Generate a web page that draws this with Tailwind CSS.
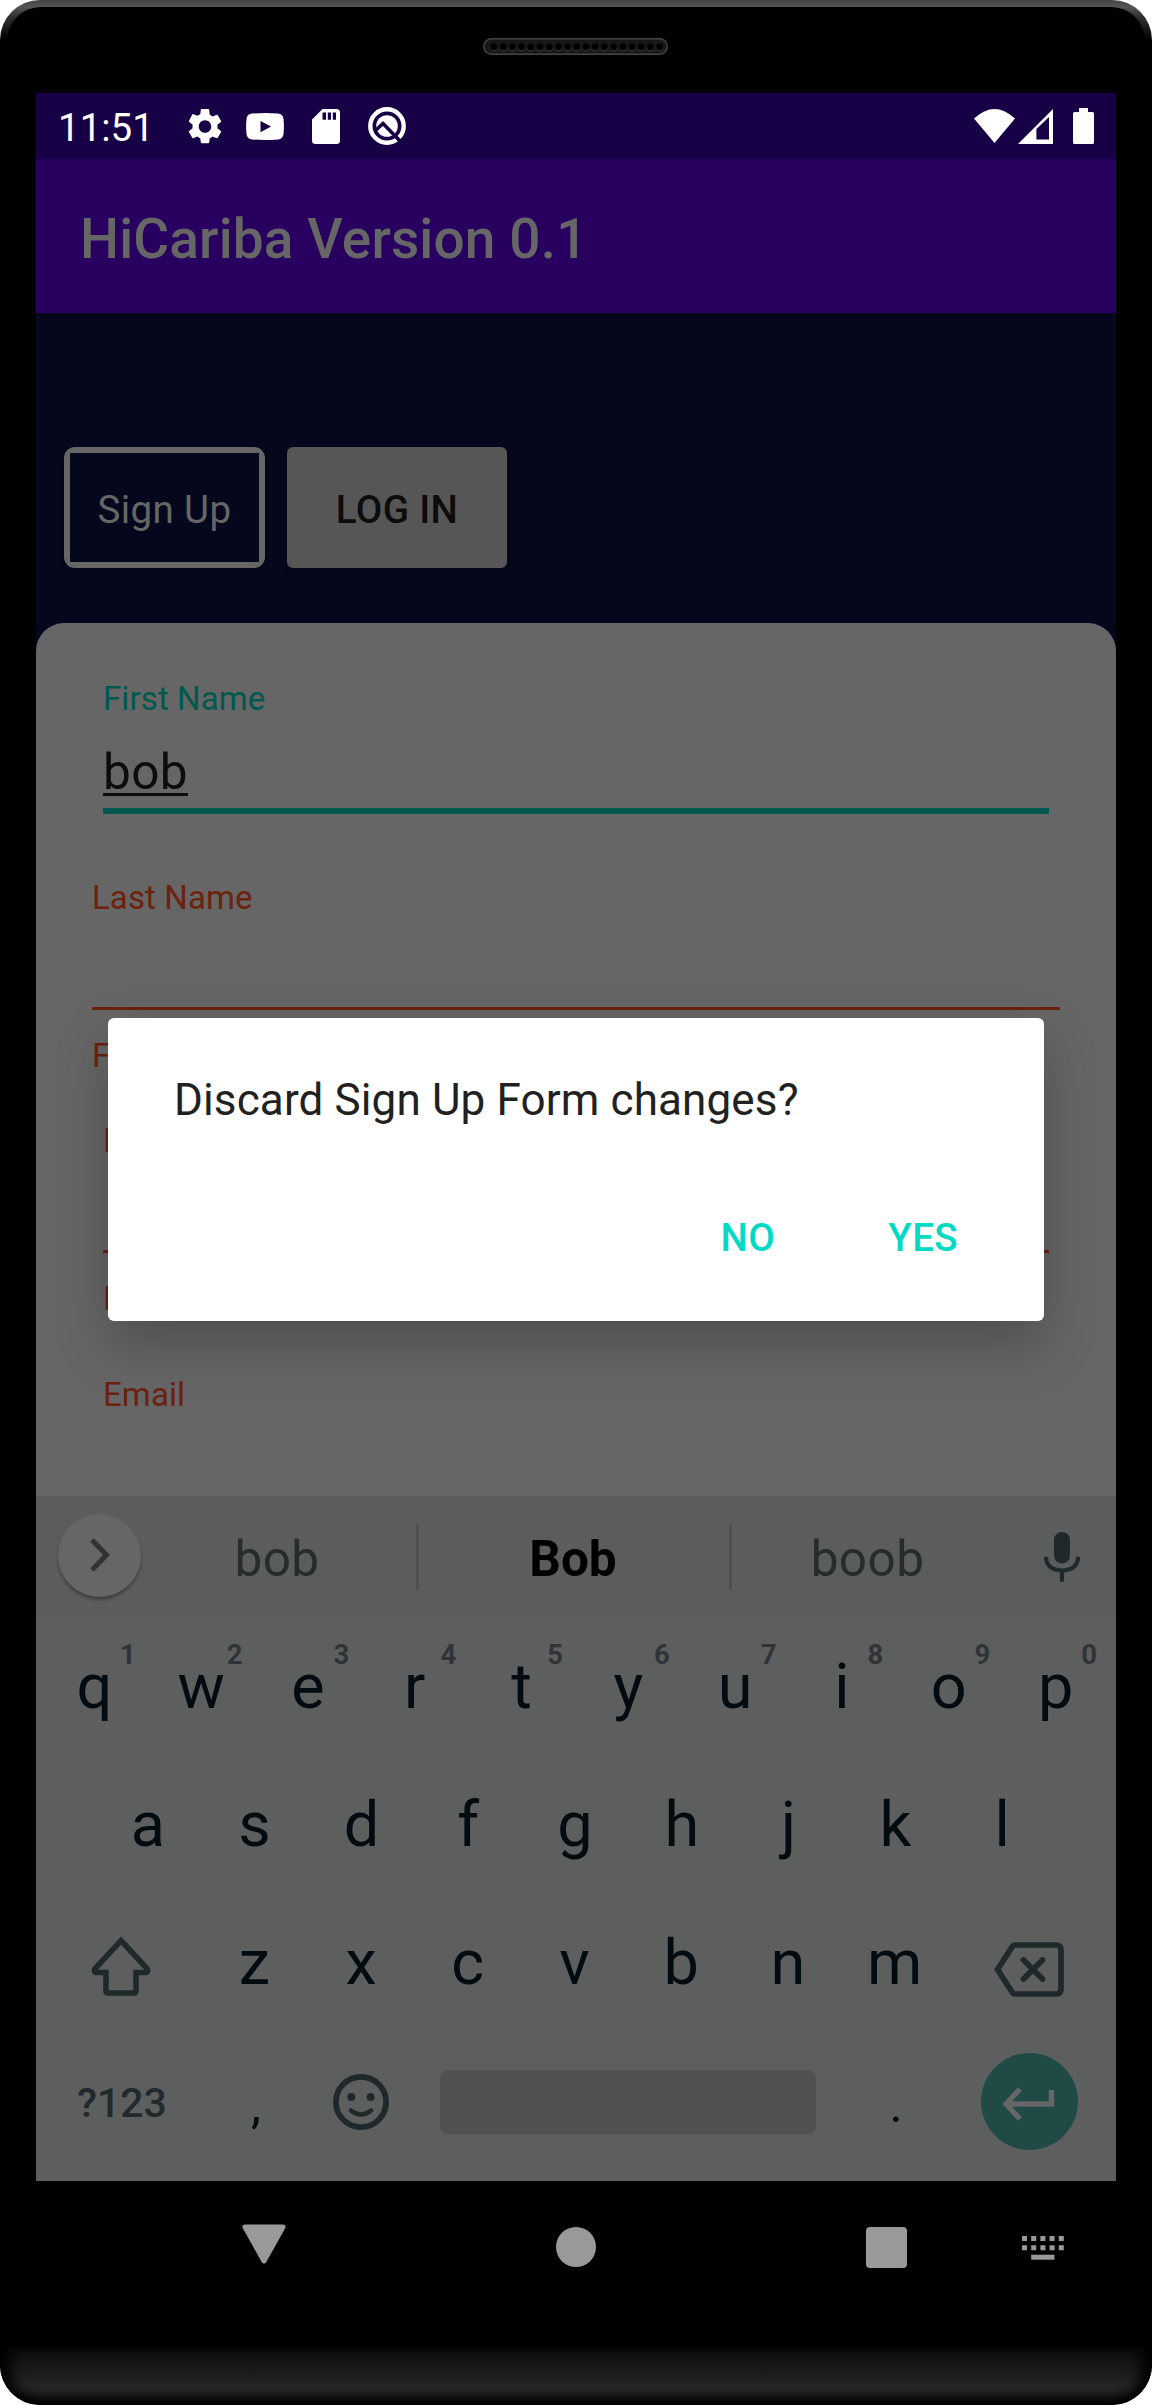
<!DOCTYPE html>
<html lang="en">
<head>
<meta charset="utf-8">
<title>HiCariba</title>
<script src="https://cdn.jsdelivr.net/npm/@tailwindcss/browser@4"></script>
</head>
<body class="bg-white">
<div class="relative w-[1152px] h-[2405px] rounded-[40px] overflow-hidden bg-black bg-[linear-gradient(to_bottom,#444_0px,#555_7px,#333_16px,#000_40px)] font-[Roboto,sans-serif]">
  <div class="flex flex-col h-full pt-[7px]">
    <!-- top bezel with speaker -->
    <div class="h-[86px] mx-[7px] shrink-0 bg-black rounded-t-[34px] flex justify-center pt-[31px]">
      <svg class="w-[185px] h-[17px] -ml-[1px]" viewBox="0 0 185 17">
        <defs><pattern id="holes" x="6.4" y="0" width="9.2" height="17" patternUnits="userSpaceOnUse"><circle cx="4.6" cy="9.6" r="3.8" fill="#3f3f3f"/><circle cx="4.6" cy="8.8" r="3.6" fill="#000"/></pattern></defs>
        <rect x=".75" y=".75" width="183.5" height="15.5" rx="7.75" fill="#181818" stroke="#444" stroke-width="1.5"/>
        <rect x="6.4" y="0" width="174.8" height="17" fill="url(#holes)"/>
      </svg>
    </div>

    <div class="w-[1080px] mx-auto shrink-0 flex flex-col bg-[#05071c]">
      <!-- status bar -->
      <div class="h-[66px] bg-[#170045] flex items-center text-white pl-[22px] pr-[22px]">
        <span class="text-[38.5px] leading-none pt-1 w-[130px]">11:51</span>
        <svg class="w-[34px] h-[35px]" viewBox="2.2 2 19.6 20" preserveAspectRatio="none" fill="#fff"><path d="M19.14 12.94c.04-.3.06-.61.06-.94 0-.32-.02-.64-.07-.94l2.03-1.58c.18-.14.23-.41.12-.61l-1.92-3.32c-.12-.22-.37-.29-.59-.22l-2.39.96c-.5-.38-1.03-.7-1.62-.94L14.4 2.4c-.04-.24-.24-.4-.48-.4h-3.84c-.24 0-.43.17-.47.41l-.36 2.54c-.59.24-1.13.57-1.62.94l-2.39-.96c-.22-.08-.47 0-.59.22L2.74 8.87c-.12.21-.08.47.12.61l2.03 1.58c-.05.3-.09.63-.09.94s.02.64.07.94l-2.03 1.58c-.18.14-.23.41-.12.61l1.92 3.32c.12.22.37.29.59.22l2.39-.96c.5.38 1.03.7 1.62.94l.36 2.54c.05.24.24.41.48.41h3.84c.24 0 .44-.17.47-.41l.36-2.54c.59-.24 1.13-.56 1.62-.94l2.39.96c.22.08.47 0 .59-.22l1.92-3.32c.12-.22.07-.47-.12-.61l-2.01-1.58zM12 15.6c-1.98 0-3.6-1.62-3.6-3.6s1.62-3.6 3.6-3.6 3.6 1.62 3.6 3.6-1.62 3.6-3.6 3.6z"/></svg>
        <svg class="w-[38px] h-[27px] ml-[24px]" viewBox="0 0 38 27"><path fill="#fff" fill-rule="evenodd" d="M6 .6Q19-.4 32 .6 37 1 37.500 6q.8 7.500 0 15-.5 5-5.500 5.400-13 1-26 0Q1 26 .5 21q-.8-7.500 0-15Q1 1 6 .6ZM14.500 8v11.200L25 13.600Z"/></svg>
        <svg class="w-[28px] h-[35px] ml-[28px]" viewBox="0 0 28 35"><path fill="#fff" fill-rule="evenodd" d="M10.500 0H24.500Q28 0 28 3.500V31.500Q28 35 24.500 35H3.500Q0 35 0 31.500V10.500ZM10.500 3.500V10.800H14V3.500ZM15.800 3.500V10.800H19V3.500ZM20.800 3.500V10.800H24V3.500Z"/></svg>
        <svg class="w-[38px] h-[38px] ml-[28px]" viewBox="0 0 38 38"><circle cx="19" cy="19" r="16.700" fill="none" stroke="#fff" stroke-width="4.400"/><circle cx="19" cy="19" r="10.800" fill="#fff"/><path d="M8 23 15 16.500 34 36" fill="none" stroke="#170045" stroke-width="3.600"/><path d="m10.500 23.500 4.500-4 8 8.500a10.800 10.800 0 0 1-12.500-4.500Z" fill="#fff"/></svg>
        <svg class="w-[41px] h-[34px] ml-auto" viewBox="0 0 41 34"><path fill="#fff" d="M0 9.500Q20.500-9.500 41 9.500L20.500 34Z"/></svg>
        <svg class="w-[35px] h-[35px] ml-[3px]" viewBox="0 0 35 35"><path fill="#fff" fill-rule="evenodd" d="M0 35 35 0V35ZM18.400 20V30.500H31V8Z"/></svg>
        <svg class="w-[21px] h-[36px] ml-[20px]" viewBox="0 0 21 36"><path fill="#fff" d="M6 0H15V4H19.500Q21 4 21 5.500V34.500Q21 36 19.500 36H1.500Q0 36 0 34.500V5.500Q0 4 1.500 4H6Z"/></svg>
      </div>
      <!-- app bar -->
      <div class="h-[154px] bg-[#270060] flex items-center pl-[44px] pt-[6px]">
        <h1 class="text-[55px] leading-none font-medium text-[#666] tracking-[0.12px]">HiCariba Version 0.1</h1>
      </div>
      <!-- form tabs -->
      <div class="h-[310px] flex gap-[22px] pt-[134px] pl-[28px]">
        <div class="w-[201px] h-[121px] rounded-[11px] bg-[#666] p-[6px] shadow-md"><div class="h-full bg-[#05071c] flex items-center justify-center pt-[5px] text-[38.5px] leading-none tracking-[0.4px] text-[#666]">Sign Up</div></div>
        <div class="w-[220px] h-[121px] rounded-[6px] bg-[#565656] shadow-md flex items-center justify-center pt-[5px] text-[38.5px] leading-none tracking-[0.4px] font-medium text-[#0c0c0c]">LOG IN</div>
      </div>
      <!-- form -->
      <div class="h-[873px] rounded-t-[28px] bg-[#666] px-[67px] pt-[56px] text-[33px] leading-[40px] text-[#6b220e] tracking-[0.1px]">
        <div class="text-[#00584f]">First Name</div>
        <div class="mt-[24px] text-[49.5px] leading-[58px] text-[#0d0d0d] tracking-[0.4px]"><span class="underline decoration-[3px] underline-offset-[4px] [text-decoration-skip-ink:none]">bob</span></div>
        <div class="mt-[7px] h-[6px] bg-[#00584f]"></div>
        <div class="-mx-[11px] mt-[64px]">
          <div>Last Name</div>
          <div class="mt-[89px] h-[3px] bg-[#6b220e]"></div>
          <div class="mt-[26px]">F</div>
        </div>
        <div class="mt-[45px]">P</div>
        <div class="mt-[89px] h-[3px] bg-[#6b220e]"></div>
        <div class="mt-[26px]">F</div>
        <div class="mt-[56px]">Email</div>
      </div>
      <!-- suggestions -->
      <div class="h-[121px] bg-[#5b5c5e] flex items-center text-[49.5px] leading-none text-[#262b2c]">
        <div class="ml-[22px] mb-[3px] size-[83px] rounded-full bg-[#666] shadow-[0_3px_3px_rgba(0,0,0,0.3)] flex items-center justify-center">
          <svg class="w-[20px] h-[34px] ml-[1px]" viewBox="0 0 20 34"><path d="M2 2 16.500 17 2 32" fill="none" stroke="#333" stroke-width="5"/></svg>
        </div>
        <div class="w-[275px] pt-[6px] pr-[3px] text-center tracking-[0.4px]">bob</div>
        <div class="w-[3px] h-[66px] bg-[#4e4f51]"></div>
        <div class="w-[310px] pr-[2px] text-center font-bold text-black pt-[6px]">Bob</div>
        <div class="w-[3px] h-[66px] bg-[#4e4f51]"></div>
        <div class="w-[273px] pr-[2px] text-center pt-[6px] tracking-[0.4px]">boob</div>
        <svg class="w-[36px] h-[50px] ml-[39px]" viewBox="0 0 36 50"><rect x="10" y="0" width="16" height="31.500" rx="8" fill="#1f282b"/><path d="M2 26.500Q3.500 38 18 38.500 32.500 38 34 26.500M18 39V48" fill="none" stroke="#1f282b" stroke-width="4.200" stroke-linecap="round"/></svg>
      </div>
      <!-- keyboard -->
      <div class="h-[564px] bg-[#5d5f5e] pl-[5px] pr-[7px] text-[63px] leading-none text-[#020c10]">
        <div id="row1" class="h-[138px] grid grid-cols-10"></div>
        <div id="row2" class="h-[138px] grid grid-cols-9 px-[53.4px]"></div>
        <div class="h-[138px] flex">
          <div class="w-[160px] flex items-center justify-center pt-[8px]">
            <svg class="w-[62px] h-[60px]" viewBox="0 0 62 60"><path d="M31 4.500 57 32.500Q59 36.500 55 36.500H46V55Q46 57 44 57H18Q16 57 16 55V36.500H7Q3 36.500 5 32.500Z" fill="none" stroke="#1f282b" stroke-width="5.600"/></svg>
          </div>
          <div id="row3" class="w-[747px] grid grid-cols-7"></div>
          <div class="flex-1 flex items-center justify-center pt-[14px]">
            <svg class="w-[70px] h-[55px]" viewBox="0 0 70 55"><path d="M21 3H62Q67 3 67 8V47Q67 52 62 52H21Q19 52 18 50L3.500 27.500 18 5Q19 3 21 3Z" fill="none" stroke="#1f282b" stroke-width="5.700"/><path d="M29.500 18 48.500 37M48.500 18 29.500 37" stroke="#1f282b" stroke-width="5.800" stroke-linecap="round"/></svg>
          </div>
        </div>
        <div class="h-[138px] flex items-center">
          <div class="w-[160px] text-center text-[41px] font-medium text-[#21292c] pt-[6px] pl-[2px]">?123</div>
          <div class="w-[107px] text-center text-[50px] pt-[10px] pl-[3px]">,</div>
          <div class="w-[107px] flex justify-center pt-[3px] pr-[1px]">
            <svg class="size-[56px]" viewBox="0 0 56 56"><circle cx="28" cy="28" r="25.100" fill="none" stroke="#1f282b" stroke-width="5.800"/><circle cx="18.300" cy="23" r="4" fill="#1f282b"/><circle cx="37.700" cy="23" r="4" fill="#1f282b"/><path d="M18 36.500Q28 44.500 38 36.500" fill="none" stroke="#1f282b" stroke-width="4.600" stroke-linecap="round"/></svg>
          </div>
          <div class="ml-[25px] mr-[24px] w-[376px] h-[64px] mt-[4px] rounded-[8px] bg-[#505153]"></div>
          <div class="w-[110px] text-center text-[50px] pt-[10px] pl-[2px]">.</div>
          <div class="flex-1 flex justify-center">
            <div class="size-[97px] mt-[3px] mr-[1px] rounded-full bg-[#204a46] flex items-center justify-center pt-[4px]">
              <svg class="w-[53px] h-[34px] mr-[2px]" viewBox="0 0 53 34"><path d="M18 2 4 17 18 32M5 17H49.500V3" fill="none" stroke="#666" stroke-width="5.400"/></svg>
            </div>
          </div>
        </div>
      </div>
      <!-- navigation bar -->
      <div class="h-[166px] bg-black grid grid-cols-[413px_254px_368px_45px]">
        <svg class="w-[44px] h-[40px] ml-[206px] mt-[43px]" viewBox="0 0 44 40"><path d="M3 3H41L22 37Z" fill="#999" stroke="#999" stroke-width="5" stroke-linejoin="round"/></svg>
        <div class="size-[40px] rounded-full bg-[#999] ml-[107px] mt-[46px]"></div>
        <div class="flex">
          <div class="size-[41px] rounded-[4px] bg-[#999] ml-[163px] mt-[46px]"></div>
          <svg class="w-[42px] h-[24px] ml-[115px] mt-[55px] shrink-0" viewBox="0 0 42 24" fill="none" stroke="#999" stroke-width="5"><path d="M0 2.500H42M0 11.700H42" stroke-dasharray="5 4.200"/><path d="M9.200 21.200H32.500"/></svg>
        </div>
      </div>
    </div>
    <!-- lower lip of the phone -->
    <div class="h-[58px] shrink-0 bg-[linear-gradient(to_bottom,#0c0c0c_0px,#161616_18px,#262626_40px,#1c1c1c_47px,#000_58px)] rounded-b-[40px] shadow-[inset_14px_0_14px_-4px_#000,inset_-14px_0_14px_-4px_#000]"></div>
  </div>

  <!-- dialog -->
  <div class="absolute left-[36px] top-[93px] w-[1080px] h-[2088px] overflow-hidden">
    <div class="mx-auto mt-[925px] w-[936px] h-[303px] rounded-[6px] bg-white shadow-[0_24px_56px_rgba(0,0,0,0.24)] px-[66px] pt-[56px] leading-[52px]">
      <div class="text-[44px] text-[#212121] tracking-[0.13px]">Discard Sign Up Form changes?</div>
      <div class="mt-[86px] flex justify-end gap-[113px] pr-[20px] text-[38.5px] font-medium tracking-[0.4px] text-[#03dac5]"><span>NO</span><span>YES</span></div>
    </div>
  </div>
</div>
<script>
  const fill = (id, letters, digits) => {
    document.getElementById(id).innerHTML = [...letters].map((c, i) =>
      `<div class="relative flex items-center justify-center pt-[1px]">${c}${digits ? `<span class="absolute left-[79px] top-[24px] text-[27.5px] font-bold text-[#303337]">${digits[i]}</span>` : ''}</div>`).join('');
  };
  fill('row1', 'qwertyuiop', '1234567890');
  fill('row2', 'asdfghjkl');
  fill('row3', 'zxcvbnm');
</script>
</body>
</html>
